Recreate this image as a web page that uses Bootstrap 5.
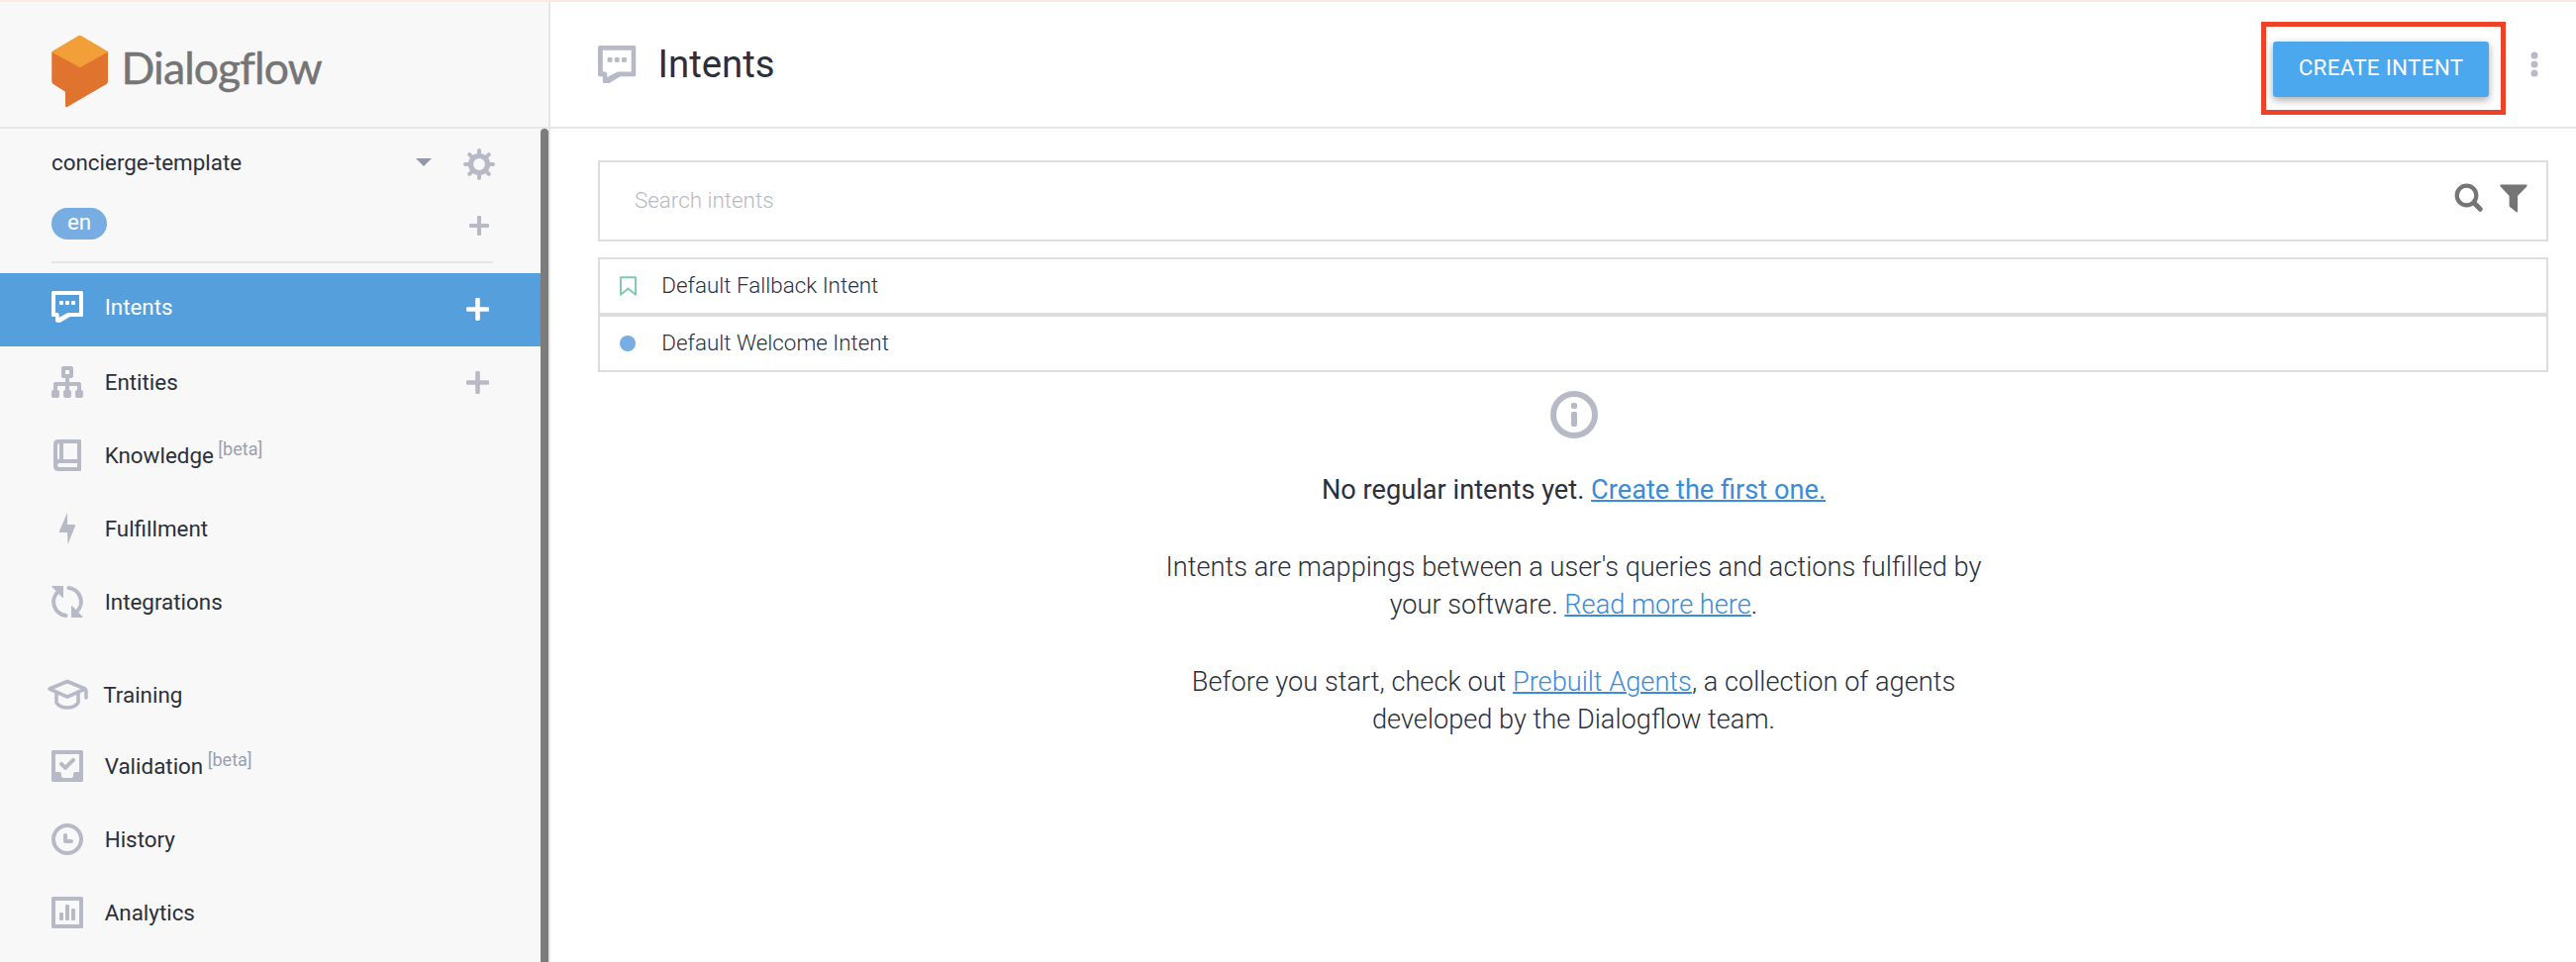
<!DOCTYPE html>
<html lang="en">
<head>
<meta charset="utf-8">
<title>Dialogflow</title>
<link href="https://cdn.jsdelivr.net/npm/bootstrap@5.3.0/dist/css/bootstrap.min.css" rel="stylesheet">
<style>
body{font-family:Roboto,sans-serif;color:#2b303b;height:972px;overflow:hidden;border-top:2px solid #fce8e6;background:#fff;line-height:1.5}
svg{display:block;flex:none}
.ico{color:#b7bac6;fill:currentColor}
.ico .ln{fill:none;stroke:currentColor;stroke-width:4}

.side{width:556px;background:#f8f8f8;border-right:2px solid #e6e6e6}
.brand{height:128px;border-bottom:2px solid #e6e6e6;padding:33px 0 0 52px}
.brand-name{font-family:Lato,sans-serif;font-size:44.5px;line-height:54px;color:#757575;-webkit-text-stroke:.5px #757575;margin:6px 0 0 12.5px;letter-spacing:-.85px;font-variant-ligatures:none}
.side-body{font-size:22.4px}
.scroll-thumb{width:8px;background:#7c7c7c;border-radius:4px 4px 0 0}
.agent{height:146px;padding:0 46px 0 52px}
.agent-row{height:68px}
.agent-name{padding-top:2px}
.lang-row{height:56px}
.lang{width:56px;height:32px;background:#78ade3;color:#fff;border-radius:16px;line-height:29px}
.caret{color:#9299a8;fill:currentColor;margin-right:32px}
.gear{margin-top:4px}
.lang-plus{margin:4px 6px 0 0}
.rule{height:2px;background:#e6e6e6;margin:10px 2px 10px 0}
.menu-item{height:74px;padding:0 52px;color:#2b303b;text-decoration:none}
.menu-item .label-text{margin-left:21.7px;line-height:32px}
.menu-item.active{background:#559fdc;color:#fff;padding-bottom:6px;margin-bottom:-1px}
.menu-item.active .ico{color:#fff}
.menu-item.active .add{margin-top:5px}
.menu-item.training{padding-left:47px;margin-top:20px;margin-bottom:-2px}
.menu-item.training .label-text{margin-left:15.3px}
.beta{color:#9a9fb0;font-size:18px;line-height:24px;margin:-12px 0 0 4.500px}

.topbar{height:128px;border-bottom:2px solid #e6e6e6;padding:0 38px 0 48px}
.topbar h1{font-size:38.4px;margin:0 0 0 22px;line-height:48px;font-weight:400}
.callout{border:5px solid #ee4127;margin:8px 25px 0 0;padding:15px 12px 13px 7.5px}
.btn-create,.btn-create:hover{width:218px;height:56px;background:#4ba7ee;color:#fff;border:0;border-radius:3px;font-size:22.4px;letter-spacing:.3px;padding:0 0 3px;box-shadow:0 3px 8px rgba(0,0,0,.35)}
.content{padding:32px 28px 0 48px}
.search{height:82px;border:2px solid #ddd;padding:0 19px 1px 35px;font-size:22.4px;font-weight:300;color:#b7bac6}
.search svg{fill:#757575;margin-bottom:5px}
.intent-list{margin-top:16px}
.intent{height:58px;border:2px solid #ddd;padding:0 20px 1px;font-size:22.4px;font-weight:300}
.intent-mark{width:17px;margin-right:25.3px}
.status-dot{width:16px;height:16px;border-radius:50%;background:#78ade3}
.empty{width:841px;padding-left:1px;margin:19px auto 0;font-size:27.2px;font-weight:300;line-height:38px}
.empty svg{margin:0 auto 33px}
.empty p{margin-bottom:40px}
.empty a{color:#3b8bdb;text-decoration-thickness:2px}
</style>
</head>
<body class="d-flex">
<svg width="0" height="0" class="position-absolute">
  <symbol id="chat" viewBox="0 0 32 32"><path fill-rule="evenodd" d="M1.500 0h29Q32 0 32 1.500v23q0 1.500-1.500 1.500H18.700L9.500 31.600q-1 .6-3.500.4-2-.3-2-2V26H1.500Q0 26 0 24.500v-23Q0 0 1.500 0zM4 4v18h2q1.700.2 1.700 2v2.700L16 22.300q.5-.3 1.200-.3H28V4z"/><rect x="8" y="10" width="4" height="4" rx="1"/><rect x="14" y="10" width="4" height="4" rx="1"/><rect x="20" y="10" width="4" height="4" rx="1"/></symbol>
  <symbol id="plus" viewBox="0 0 20 20"><path d="M9 0h2q1 0 1 1v7h7q1 0 1 1v2q0 1-1 1h-7v7q0 1-1 1H9q-1 0-1-1v-7H1q-1 0-1-1V9q0-1 1-1h7V1q0-1 1-1z"/></symbol>
</svg>
<aside class="side d-flex flex-column flex-shrink-0">
  <div class="brand d-flex align-items-start flex-shrink-0">
    <svg width="58" height="74" viewBox="0 0 58 74"><path d="M.3 17.500v29.500q0 2 1.500 3L14 57.800v14q.2 2 2 1.200L55.500 50q1.500-1 1.500-3V17.500L29 8z" fill="#e0732e"/><path d="M.8 16.700 27 1.200q1.700-1 3.400 0l26.100 15.500q.5.700-.3 1.200L28.700 33.200 1 17.900q-.6-.5-.2-1.200z" fill="#f29f39"/></svg>
    <span class="brand-name">Dialogflow</span>
  </div>
  <div class="side-body d-flex flex-grow-1">
    <nav class="flex-grow-1">
      <div class="agent">
        <div class="agent-row d-flex align-items-center">
          <span class="agent-name me-auto">concierge-template</span>
          <svg class="caret" width="16" height="8" viewBox="0 0 16 8"><path d="M0 0h16L8 8z"/></svg>
          <svg class="ico gear" width="32" height="32" viewBox="-16 -16 32 32"><circle class="ln" r="8.500" style="stroke-width:5.200"/><path class="ln" stroke-linecap="round" d="M0-10V-14M0 10V14M-10 0H-14M10 0H14M-7.300-7.300-9.800-9.800M7.300-7.300 9.800-9.800M-7.300 7.300-9.800 9.800M7.300 7.300 9.800 9.800"/></svg>
        </div>
        <div class="lang-row d-flex align-items-center justify-content-between">
          <div class="lang text-center">en</div>
          <svg class="ico lang-plus" width="20" height="20"><use href="#plus"/></svg>
        </div>
        <div class="rule"></div>
      </div>
      <a class="menu-item active d-flex align-items-center"><svg class="ico" width="32" height="32"><use href="#chat"/></svg><span class="label-text">Intents</span><svg class="ico add ms-auto" width="23" height="23"><use href="#plus"/></svg></a>
      <a class="menu-item d-flex align-items-center">
        <svg class="ico" width="32" height="32" viewBox="0 0 32 32"><path fill-rule="evenodd" d="M12 0h8q2 0 2 2v8q0 2-2 2h-2v4h10q2 0 2 2v6q2 0 2 2v4q0 2-2 2h-4q-2 0-2-2v-4q0-2 2-2v-4h-8v4q2 0 2 2v4q0 2-2 2h-4q-2 0-2-2v-4q0-2 2-2v-4H6v4q2 0 2 2v4q0 2-2 2H2q-2 0-2-2v-4q0-2 2-2v-6q0-2 2-2h10v-4h-2q-2 0-2-2V2q0-2 2-2zm2 4v4h4V4z"/></svg>
        <span class="label-text">Entities</span><svg class="ico add ms-auto" width="23" height="23"><use href="#plus"/></svg></a>
      <a class="menu-item d-flex align-items-center">
        <svg class="ico" width="32" height="32" viewBox="0 0 32 32"><path fill-rule="evenodd" d="M7 0h21.500Q30 0 30 1.500v29q0 1.500-1.500 1.500H7q-5 0-5-5V5q0-5 5-5zm1 4Q6 4 6 6v14h2zm4 0v16h14V4zM8 24q-2 0-2 2t2 2h18v-4z"/></svg>
        <span class="label-text">Knowledge</span><span class="beta">[beta]</span></a>
      <a class="menu-item d-flex align-items-center">
        <svg class="ico" width="32" height="32" viewBox="0 0 32 32"><path d="M16 0v12h7q1.500 0 1 1.500L16.500 32 16 20H9q-1.500 0-1-1.500z"/></svg>
        <span class="label-text">Fulfillment</span></a>
      <a class="menu-item d-flex align-items-center">
        <svg class="ico" width="32" height="32" viewBox="0 0 32 32"><path d="M1 0h11v11.500q-.3 1-1 .2L.5 1Q0 0 1 0zM31 32H20V20.500q.3-1 1-.2L31.500 31q.5 1-.5 1z"/><path class="ln" stroke-linecap="round" d="M14.500 30A14 14 0 0 1 7 5.500M17.500 2A14 14 0 0 1 25 26.500"/></svg>
        <span class="label-text">Integrations</span></a>
      <a class="menu-item training d-flex align-items-center">
        <svg class="ico" width="42" height="32" viewBox="0 0 42 32"><g class="ln" style="stroke-width:3.600" stroke-linejoin="round" stroke-linecap="round"><path d="M3 10 21 2.500 39 10 21 18.200zM10 14v10q3.500 5 11 5t11-5V14M39 10.500q1 .5 1 2V19"/></g></svg>
        <span class="label-text">Training</span></a>
      <a class="menu-item d-flex align-items-center">
        <svg class="ico" width="32" height="32" viewBox="0 0 32 32"><path fill-rule="evenodd" d="M1.500 0h29Q32 0 32 1.500v29q0 1.500-1.500 1.500h-29Q0 32 0 30.500v-29Q0 0 1.500 0zM4 4v18h4q2 0 2 2v2q0 2 2 2h8q2 0 2-2v-2q0-2 2-2h4V4z"/><path class="ln" stroke-linecap="round" stroke-linejoin="round" d="m10 13.800 4 4 8-8"/></svg>
        <span class="label-text">Validation</span><span class="beta">[beta]</span></a>
      <a class="menu-item d-flex align-items-center">
        <svg class="ico" width="32" height="32" viewBox="0 0 32 32"><circle class="ln" cx="16" cy="16" r="14"/><path class="ln" stroke-linecap="round" stroke-linejoin="round" d="M14 12v6h6"/></svg>
        <span class="label-text">History</span></a>
      <a class="menu-item d-flex align-items-center">
        <svg class="ico" width="32" height="32" viewBox="0 0 32 32"><path fill-rule="evenodd" d="M1.500 0h29Q32 0 32 1.500v29q0 1.500-1.500 1.500h-29Q0 32 0 30.500v-29Q0 0 1.500 0zM4 4v24h24V4z"/><rect x="8" y="16" width="4" height="8" rx="1.300"/><rect x="14" y="8" width="4" height="16" rx="1.300"/><rect x="20" y="12" width="4" height="12" rx="1.300"/></svg>
        <span class="label-text">Analytics</span></a>
    </nav>
    <div class="scroll-thumb flex-shrink-0"></div>
  </div>
</aside>
<main class="flex-grow-1">
  <header class="topbar d-flex align-items-center">
    <svg class="ico" width="38.500" height="38.500"><use href="#chat"/></svg>
    <h1>Intents</h1>
    <div class="callout ms-auto"><button class="btn btn-create">CREATE INTENT</button></div>
    <svg class="ico" width="8" height="26" viewBox="0 0 8 26"><circle cx="4" cy="4" r="3.500"/><circle cx="4" cy="13" r="3.500"/><circle cx="4" cy="22" r="3.500"/></svg>
  </header>
  <div class="content">
    <div class="search d-flex align-items-center">
      <span class="me-auto">Search intents</span>
      <svg class="me-3" width="30" height="30" viewBox="0 0 30 30"><circle cx="12.500" cy="12.500" r="9.800" fill="none" stroke="#757575" stroke-width="4.200"/><path d="m20.500 20.500 5.800 5.800" stroke="#757575" stroke-width="5" stroke-linecap="round"/></svg>
      <svg width="28" height="29" viewBox="0 0 28 29"><path d="M.8.500h26.400q.8 1.300-.2 2.300L18 12v15.500q-.3 1.300-1.400.8L9.600 22.500V12L.9 2.800q-1-1-.1-2.300z"/></svg>
    </div>
    <div class="intent-list">
      <div class="intent d-flex align-items-center">
        <span class="intent-mark"><svg width="17" height="20" viewBox="0 0 17 20"><path d="M1 1.200h15v17.600l-7.500-6.300L1 18.800z" fill="none" stroke="#7ccab0" stroke-width="1.900" stroke-linejoin="round"/></svg></span>
        <span>Default Fallback Intent</span>
      </div>
      <div class="intent d-flex align-items-center">
        <span class="intent-mark"><span class="status-dot d-block"></span></span>
        <span>Default Welcome Intent</span>
      </div>
    </div>
    <div class="empty text-center">
      <svg class="ico" width="48" height="48" viewBox="0 0 48 48"><circle cx="24" cy="24" r="21" fill="none" stroke="currentColor" stroke-width="6"/><rect x="21" y="12" width="6" height="6" rx="1.800"/><rect x="21" y="21" width="6" height="15" rx="1.800"/></svg>
      <p class="fw-normal">No regular intents yet. <a href="#">Create the first one.</a></p>
      <p>Intents are mappings between a user's queries and actions fulfilled by your software. <a href="#">Read more here</a>.</p>
      <p>Before you start, check out <a href="#">Prebuilt Agents</a>, a collection of agents developed by the Dialogflow team.</p>
    </div>
  </div>
</main>
<script src="https://cdn.jsdelivr.net/npm/bootstrap@5.3.0/dist/js/bootstrap.bundle.min.js"></script>
</body>
</html>
